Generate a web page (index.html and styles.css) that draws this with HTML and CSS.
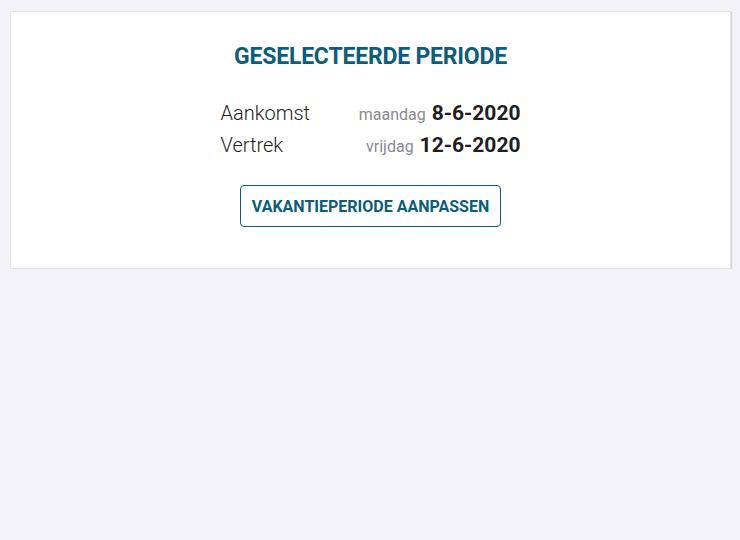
FILE: index.html
```html
<!DOCTYPE html>
<html lang="nl">
<head>
  <meta charset="UTF-8">
  <meta name="viewport" content="width=device-width, initial-scale=1">
  <title>Geselecteerde periode</title>
  <link rel="stylesheet" href="styles.css">
</head>
<body>

<div class="period-card">
  <h2 class="period-title">GESELECTEERDE PERIODE</h2>

  <table class="period-table">
    <tr>
      <td class="label">Aankomst</td>
      <td class="date"><span class="weekday">maandag</span> <span class="day">8-6-2020</span></td>
    </tr>
    <tr>
      <td class="label">Vertrek</td>
      <td class="date"><span class="weekday">vrijdag</span> <span class="day">12-6-2020</span></td>
    </tr>
  </table>

  <button class="change-button">VAKANTIEPERIODE AANPASSEN</button>
</div>

</body>
</html>
```

FILE: styles.css
```css
*, *::before, *::after {
  box-sizing: border-box;
}

body {
  font-family: Roboto, "Noto Sans", sans-serif;
  background-color: #f3f3f7;
  margin: 0;
  padding: 11px 9px 0 10px;
  color: #1e1e22;
}

.period-card {
  background-color: #ffffff;
  border: 1px solid #e2e2e8;
  box-shadow: 1px 1px 1px rgba(0,0,0,0.12);
  padding: 31px 20px 41px;
  display: flex;
  flex-direction: column;
  align-items: center;
}

.period-title {
  margin: 0 0 27px;
  font-size: 23px;
  line-height: 27px;
  font-weight: bold;
  color: #0b5d7a;
  letter-spacing: -0.2px;
}

.period-table {
  width: 300px;
  border-collapse: collapse;
}

.period-table td {
  padding: 0;
  height: 32px;
}

.label {
  font-size: 20px;
  font-weight: 300;
}

.date {
  text-align: right;
}

.weekday {
  font-size: 16px;
  color: #8a8a90;
  margin-right: 2px;
}

.day {
  font-size: 21px;
  font-weight: bold;
}

.change-button {
  margin-top: 24px;
  width: 261px;
  height: 42px;
  background: #ffffff;
  border: 1px solid #0b5d7a;
  border-radius: 4px;
  color: #0b5d7a;
  font-family: Roboto, "Noto Sans", sans-serif;
  font-size: 16px;
  font-weight: bold;
  cursor: pointer;
}
```
